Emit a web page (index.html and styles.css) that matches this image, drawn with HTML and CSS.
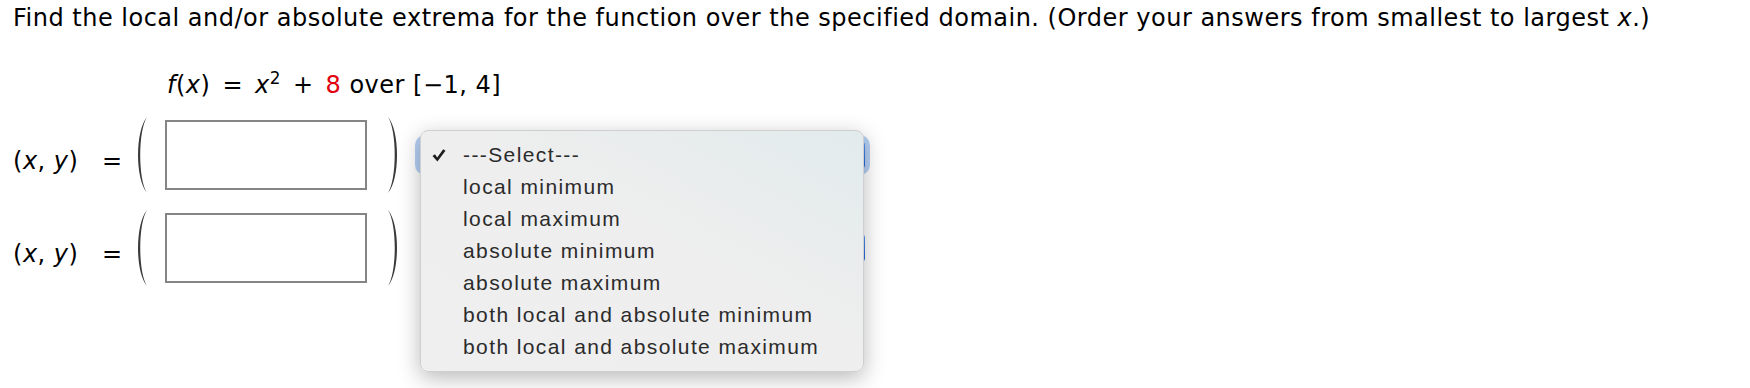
FILE: index.html
```html
<!DOCTYPE html>
<html lang="en">
<head>
<meta charset="UTF-8">
<title>Extrema</title>
<link rel="stylesheet" href="styles.css">
</head>
<body>

<p class="prompt">Find the local and/or absolute extrema for the function over the specified domain. (Order your answers from smallest to largest <i>x</i>.)</p>

<p class="formula"><i>f</i>(<i>x</i>)<span class="op">=</span><i>x</i><sup>2</sup><span class="op">+</span><span class="red">8</span> over [&minus;1,&nbsp;4]</p>

<div class="answers">
<div class="row">
<span class="label">(<i>x</i>, <i>y</i>)</span>
<span class="eq">=</span>
<svg class="paren" width="16" height="78" viewBox="0 0 16 78"><path d="M15 1 C3 15 3 63 15 77 C6 63 6 15 15 1 Z"/></svg>
<div class="box"></div>
<svg class="paren" width="16" height="78" viewBox="0 0 16 78"><path d="M1 1 C13 15 13 63 1 77 C10 63 10 15 1 1 Z"/></svg>
<div class="select-wrap">
<div class="select focused"></div>
<div class="menu">
<div class="item checked"><svg class="check" width="14" height="13" viewBox="0 0 14 13"><path d="M0.5 7 L3 5.2 L5.2 8.4 L11.2 0.3 L13.5 1.8 L5.4 12.5 Z"/></svg>---Select---</div>
<div class="item">local minimum</div>
<div class="item">local maximum</div>
<div class="item">absolute minimum</div>
<div class="item">absolute maximum</div>
<div class="item">both local and absolute minimum</div>
<div class="item">both local and absolute maximum</div>
</div>
</div>
</div>

<div class="row">
<span class="label">(<i>x</i>, <i>y</i>)</span>
<span class="eq">=</span>
<svg class="paren" width="16" height="78" viewBox="0 0 16 78"><path d="M15 1 C3 15 3 63 15 77 C6 63 6 15 15 1 Z"/></svg>
<div class="box"></div>
<svg class="paren" width="16" height="78" viewBox="0 0 16 78"><path d="M1 1 C13 15 13 63 1 77 C10 63 10 15 1 1 Z"/></svg>
<div class="select-wrap">
<div class="select"></div>
</div>
</div>
</div>

</body>
</html>
```

FILE: styles.css
```css
html,
body {
min-height: 388px;
}

body {
margin: 0;
font-family: "DejaVu Sans", Verdana, sans-serif;
font-size: 24px;
letter-spacing: 0.5px;
color: #000;
background: #fff;
}

.prompt {
margin: 0;
padding: 3px 0 0 13px;
line-height: 30px;
white-space: nowrap;
}

.formula {
margin: 0;
padding: 37px 0 0 167px;
line-height: 30px;
}

.formula .op {
margin: 0 12px;
}

.formula sup {
font-size: 0.7em;
line-height: 0;
}

.red {
color: #e00010;
}

.answers {
margin-top: 8px;
}

.row {
display: flex;
align-items: center;
height: 93px;
}

.label {
margin-left: 13px;
width: 80px;
padding-top: 12px;
line-height: 30px;
white-space: nowrap;
}

.eq {
margin-left: 9px;
width: 30px;
padding-top: 12px;
line-height: 30px;
}

.paren {
display: block;
}

.paren path {
fill: #3a3a3a;
}

.box {
width: 198px;
height: 66px;
margin: 0 20px 0 17px;
border: 2px solid #858585;
background: #fff;
}

.select-wrap {
position: relative;
margin-left: 17px;
}

.select {
width: 445px;
height: 30px;
border-radius: 5px;
background: linear-gradient(#5b9bf2, #1b62dc);
}

.select.focused {
box-shadow: 0 0 0 5px rgba(120, 170, 235, 0.55);
}

.menu {
position: absolute;
top: -10px;
left: 0;
width: 400px;
padding: 8px 0 8px 42px;
border: 1px solid #cfcfcf;
border-radius: 8px;
background: linear-gradient(to bottom left, #e2ebec, #eeeeee 45%, #efefef);
box-shadow: 0 6px 22px rgba(0, 0, 0, 0.28);
font-family: "Liberation Sans", Arial, sans-serif;
font-size: 21px;
letter-spacing: 1.4px;
color: #2b2b2b;
z-index: 2;
}

.item {
position: relative;
height: 32px;
line-height: 32px;
white-space: nowrap;
}

.check {
position: absolute;
left: -31px;
top: 10px;
}

.check path {
fill: #1e1e1e;
}
```
